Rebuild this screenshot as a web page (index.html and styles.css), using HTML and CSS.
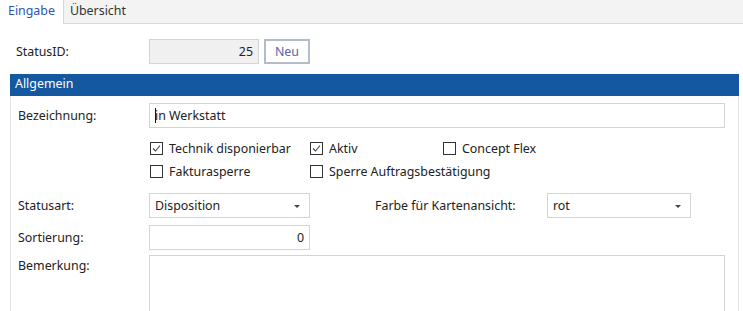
FILE: index.html
```html
<!DOCTYPE html>
<html lang="de">
<head>
    <meta charset="UTF-8">
    <title>Status</title>
    <link rel="stylesheet" href="styles.css">
</head>
<body>

    <div class="tabs">
        <div class="tab active">Eingabe</div>
        <div class="tab">Übersicht</div>
    </div>

    <div class="page">
        <div class="id-row">
            <label class="label">StatusID:</label>
            <div class="field readonly num">25</div>
            <button class="new-button">Neu</button>
        </div>

        <div class="group">
            <div class="group-header">Allgemein</div>
            <div class="group-body">
                <div class="row">
                    <label class="label">Bezeichnung:</label>
                    <div class="field wide"><span class="caret"></span>in Werkstatt</div>
                </div>

                <div class="checks">
                    <div class="check checked">Technik disponierbar</div>
                    <div class="check checked">Aktiv</div>
                    <div class="check">Concept Flex</div>
                    <div class="check">Fakturasperre</div>
                    <div class="check">Sperre Auftragsbestätigung</div>
                </div>

                <div class="row">
                    <label class="label">Statusart:</label>
                    <div class="field select short">Disposition</div>
                    <label class="label color-label">Farbe für Kartenansicht:</label>
                    <div class="field select color-select">rot</div>
                </div>

                <div class="row tight">
                    <label class="label">Sortierung:</label>
                    <div class="field short num">0</div>
                </div>

                <div class="row">
                    <label class="label top">Bemerkung:</label>
                    <div class="field wide memo"></div>
                </div>
            </div>
        </div>
    </div>

</body>
</html>
```

FILE: styles.css
```css
body {
    margin: 0;
    font-family: "Segoe UI", "Noto Sans", sans-serif;
    font-size: 12.4px;
    color: #222;
    background-color: white;
    overflow: hidden;
}

.tabs {
    display: flex;
    height: 23px;
    background-color: #f3f3f3;
    border-bottom: 1px solid #d9d9d9;
}

.tab {
    padding: 0 6px 0 6px;
    line-height: 22px;
    color: #333;
}

.tab.active {
    height: 24px;
    padding: 0 8px;
    background-color: white;
    border-right: 1px solid #d9d9d9;
    color: #2b55b5;
}

.page {
    padding: 15px 4px 0 10px;
}

.id-row {
    display: flex;
    align-items: center;
    padding-left: 6px;
    height: 25px;
}

.id-row .label {
    width: 133px;
}

.label {
    flex: none;
    width: 131px;
}

.field {
    box-sizing: border-box;
    height: 25px;
    line-height: 24px;
    border: 1px solid #d4d4d4;
    padding: 0 5px;
    background-color: white;
}

.readonly {
    width: 110px;
    background-color: #f0f0f0;
}

.num {
    text-align: right;
}

.new-button {
    margin-left: 5px;
    width: 46px;
    height: 25px;
    border: 2px solid #b2bccb;
    background-color: white;
    color: #5568a8;
    font-family: inherit;
    font-size: 12.4px;
    padding: 0;
}

.group {
    margin-top: 10px;
    border-left: 1px solid #e3e3e3;
    border-right: 1px solid #e3e3e3;
}

.group-header {
    height: 22px;
    line-height: 20px;
    background-color: #1358a0;
    color: white;
    padding-left: 5px;
    margin: 0 -1px;
}

.group-body {
    padding: 7px 13px 0 7px;
}

.row {
    display: flex;
    align-items: center;
    margin-bottom: 7px;
}

.row.tight {
    margin-bottom: 5px;
}

.wide {
    flex: 1;
}

.caret {
    display: inline-block;
    width: 1px;
    height: 15px;
    background-color: #111;
    vertical-align: -3px;
    margin-right: -1px;
}

.checks {
    display: grid;
    grid-template-columns: 160px 133px auto;
    row-gap: 5px;
    margin: 11px 0 13px 132px;
}

.check {
    display: flex;
    align-items: center;
    height: 18px;
    white-space: nowrap;
}

.check::before {
    content: "";
    flex: none;
    box-sizing: border-box;
    width: 13px;
    height: 13px;
    border: 1px solid #333;
    margin-right: 6px;
    background-position: center;
    background-repeat: no-repeat;
}

.check.checked::before {
    background-image: url("data:image/svg+xml;utf8,<svg xmlns='http://www.w3.org/2000/svg' width='11' height='11'><path d='M2 5.5 L4.5 8 L9 2.5' fill='none' stroke='%23444' stroke-width='1.1'/></svg>");
}

.select {
    position: relative;
    padding-right: 20px;
}

.select::after {
    content: "";
    position: absolute;
    right: 9px;
    top: 11px;
    border-left: 3px solid transparent;
    border-right: 3px solid transparent;
    border-top: 3px solid #444;
}

.short {
    width: 161px;
}

.color-label {
    margin-left: 65px;
    width: 172px;
}

.color-select {
    width: 144px;
}

.memo {
    height: 70px;
}

.top {
    align-self: flex-start;
    padding-top: 2px;
}
```
